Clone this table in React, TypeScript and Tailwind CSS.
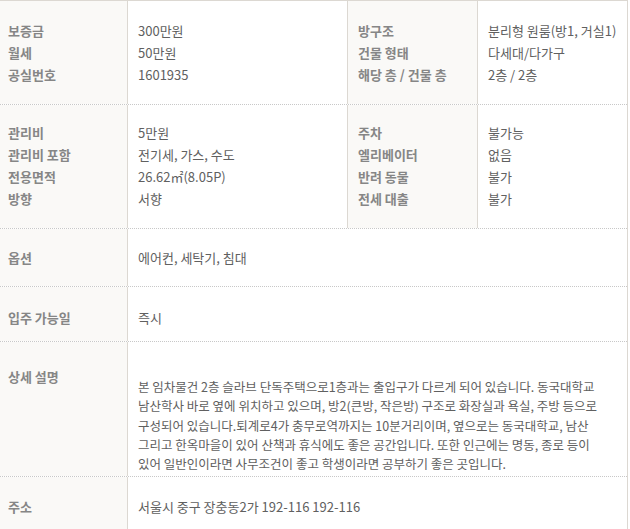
import React from "react";

const font = { fontFamily: '"Noto Sans CJK KR", "Noto Sans", sans-serif' };

function Label({ children }: { children: React.ReactNode }) {
  return <div className="font-bold text-[#868686] whitespace-nowrap">{children}</div>;
}
function Val({ children }: { children: React.ReactNode }) {
  return <div className="text-[#606060] whitespace-nowrap">{children}</div>;
}

export default function App() {
  return (
    <div className="w-[630px] h-[529px] overflow-hidden bg-white text-[13px] leading-[22px]" style={font}>
      <div className="w-[628px] border-t border-r border-[#dcd8d2]">
        {/* Section 1 */}
        <div className="flex border-b border-dotted border-[#c8c8c8]">
          <div className="w-[128px] shrink-0 bg-[#faf9f7] border-r border-[#dcd8d2] pl-[8px] pt-[19px] pb-[18px]">
            <Label>보증금</Label>
            <Label>월세</Label>
            <Label>공실번호</Label>
          </div>
          <div className="w-[219px] shrink-0 pl-[10px] pt-[19px] pb-[18px]">
            <Val>300만원</Val>
            <Val>50만원</Val>
            <Val>1601935</Val>
          </div>
          <div className="w-[131px] shrink-0 bg-[#faf9f7] border-l border-r border-[#dcd8d2] pl-[10px] pt-[19px] pb-[18px]">
            <Label>방구조</Label>
            <Label>건물 형태</Label>
            <Label>해당 층 / 건물 층</Label>
          </div>
          <div className="flex-1 pl-[10px] pt-[19px] pb-[18px]">
            <Val>분리형 원룸(방1, 거실1)</Val>
            <Val>다세대/다가구</Val>
            <Val>2층 / 2층</Val>
          </div>
        </div>
        {/* Section 2 */}
        <div className="flex border-b border-dotted border-[#c8c8c8]">
          <div className="w-[128px] shrink-0 bg-[#faf9f7] border-r border-[#dcd8d2] pl-[8px] pt-[17px] pb-[18px]">
            <Label>관리비</Label>
            <Label>관리비 포함</Label>
            <Label>전용면적</Label>
            <Label>방향</Label>
          </div>
          <div className="w-[219px] shrink-0 pl-[10px] pt-[17px] pb-[18px]">
            <Val>5만원</Val>
            <Val>전기세, 가스, 수도</Val>
            <Val>26.62㎡(8.05P)</Val>
            <Val>서향</Val>
          </div>
          <div className="w-[131px] shrink-0 bg-[#faf9f7] border-l border-r border-[#dcd8d2] pl-[10px] pt-[17px] pb-[18px]">
            <Label>주차</Label>
            <Label>엘리베이터</Label>
            <Label>반려 동물</Label>
            <Label>전세 대출</Label>
          </div>
          <div className="flex-1 pl-[10px] pt-[17px] pb-[18px]">
            <Val>불가능</Val>
            <Val>없음</Val>
            <Val>불가</Val>
            <Val>불가</Val>
          </div>
        </div>
        {/* Section 3 */}
        <div className="flex border-b border-dotted border-[#c8c8c8]">
          <div className="w-[128px] shrink-0 bg-[#faf9f7] border-r border-[#dcd8d2] pl-[8px] pt-[18px] pb-[17px]">
            <Label>옵션</Label>
          </div>
          <div className="flex-1 pl-[10px] pt-[18px] pb-[17px]">
            <Val>에어컨, 세탁기, 침대</Val>
          </div>
        </div>
        {/* Section 4 */}
        <div className="flex border-b border-dotted border-[#c8c8c8]">
          <div className="w-[128px] shrink-0 bg-[#faf9f7] border-r border-[#dcd8d2] pl-[8px] pt-[20px] pb-[12px]">
            <Label>입주 가능일</Label>
          </div>
          <div className="flex-1 pl-[10px] pt-[20px] pb-[12px]">
            <Val>즉시</Val>
          </div>
        </div>
        {/* Section 5 */}
        <div className="flex border-b border-dotted border-[#c8c8c8]">
          <div className="w-[128px] shrink-0 bg-[#faf9f7] border-r border-[#dcd8d2] pl-[8px] pt-[24px]">
            <Label>상세 설명</Label>
          </div>
          <div className="flex-1 pl-[10px] pt-[35px] pb-[3px] text-[12.5px] leading-[19.25px] text-[#606060] whitespace-nowrap">
            본 임차물건 2층 슬라브 단독주택으로1층과는 출입구가 다르게 되어 있습니다. 동국대학교
            <br />
            남산학사 바로 옆에 위치하고 있으며, 방2(큰방, 작은방) 구조로 화장실과 욕실, 주방 등으로
            <br />
            구성되어 있습니다.퇴계로4가 충무로역까지는 10분거리이며, 옆으로는 동국대학교, 남산
            <br />
            그리고 한옥마을이 있어 산책과 휴식에도 좋은 공간입니다. 또한 인근에는 명동, 종로 등이
            <br />
            있어 일반인이라면 사무조건이 좋고 학생이라면 공부하기 좋은 곳입니다.
          </div>
        </div>
        {/* Section 6 */}
        <div className="flex">
          <div className="w-[128px] shrink-0 bg-[#faf9f7] border-r border-[#dcd8d2] pl-[8px] pt-[19px] pb-[20px]">
            <Label>주소</Label>
          </div>
          <div className="flex-1 pl-[10px] pt-[19px] pb-[20px]">
            <Val>서울시 중구 장충동2가 192-116 192-116</Val>
          </div>
        </div>
      </div>
    </div>
  );
}
